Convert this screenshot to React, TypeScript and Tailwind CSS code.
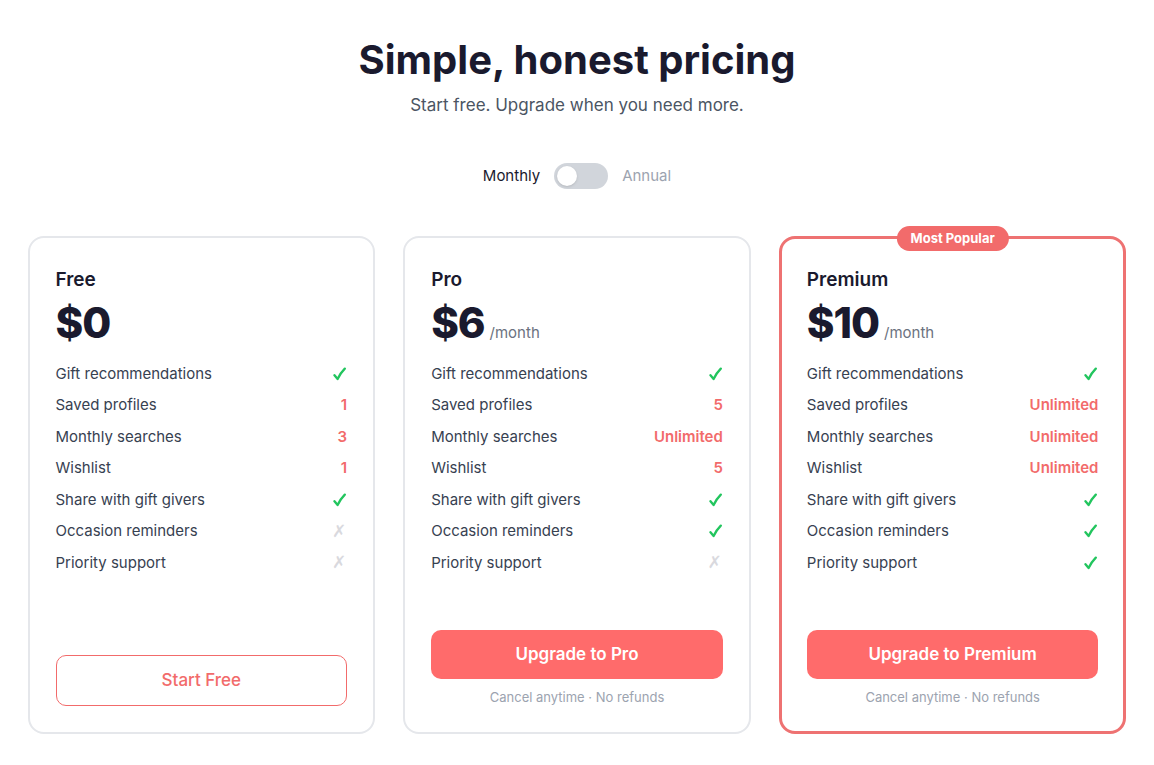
import { useState } from "react";

type Val = "check" | "x" | string;

interface PlanI {
  name: string;
  price: string;
  per?: boolean;
  features: [string, Val][];
  cta: string;
  primary?: boolean;
  popular?: boolean;
  note?: boolean;
}

const plans: PlanI[] = [
  {
    name: "Free",
    price: "$0",
    features: [
      ["Gift recommendations", "check"],
      ["Saved profiles", "1"],
      ["Monthly searches", "3"],
      ["Wishlist", "1"],
      ["Share with gift givers", "check"],
      ["Occasion reminders", "x"],
      ["Priority support", "x"],
    ],
    cta: "Start Free",
  },
  {
    name: "Pro",
    price: "$6",
    per: true,
    features: [
      ["Gift recommendations", "check"],
      ["Saved profiles", "5"],
      ["Monthly searches", "Unlimited"],
      ["Wishlist", "5"],
      ["Share with gift givers", "check"],
      ["Occasion reminders", "check"],
      ["Priority support", "x"],
    ],
    cta: "Upgrade to Pro",
    primary: true,
    note: true,
  },
  {
    name: "Premium",
    price: "$10",
    per: true,
    features: [
      ["Gift recommendations", "check"],
      ["Saved profiles", "Unlimited"],
      ["Monthly searches", "Unlimited"],
      ["Wishlist", "Unlimited"],
      ["Share with gift givers", "check"],
      ["Occasion reminders", "check"],
      ["Priority support", "check"],
    ],
    cta: "Upgrade to Premium",
    primary: true,
    popular: true,
    note: true,
  },
];

function Value({ v }: { v: Val }) {
  if (v === "check")
    return (
      <svg width="13" height="14" viewBox="0 0 13 14" className="mr-[1px]">
        <path
          d="M1.5 8.2 L4.6 12 C6.5 8 8.8 4.6 11.8 1.6"
          fill="none"
          stroke="#22c55e"
          strokeWidth="2.3"
          strokeLinecap="round"
          strokeLinejoin="round"
        />
      </svg>
    );
  if (v === "x")
    return <span className="font-['DejaVu_Sans',sans-serif] text-[17px] text-[#d9d9de] mr-[1px]">✗</span>;
  return <span className="text-[15px] font-semibold text-[#f26b6b]">{v}</span>;
}

function PlanCard({ plan }: { plan: PlanI }) {
  return (
    <div
      className={`relative flex flex-col rounded-2xl bg-white ${
        plan.popular
          ? "border-[3px] border-[#ee7272] px-[25px] pt-[27px] pb-[25px]"
          : "border-2 border-[#e5e7eb] px-[26px] pt-[28px] pb-[26px]"
      }`}
    >
      {plan.popular && (
        <div className="absolute -top-[13px] left-1/2 -translate-x-1/2 rounded-full bg-[#f26b6b] px-[14px] h-[25px] flex items-center text-[13px] font-bold text-white">
          Most Popular
        </div>
      )}
      <p className="text-[19px] leading-[28px] font-semibold text-[#1a1a2e]">{plan.name}</p>
      <div className="mt-[2px] flex items-baseline h-[54px]">
        <span className="text-[42px] leading-[54px] font-extrabold text-[#1a1a2e] tracking-tight">{plan.price}</span>
        {plan.per && <span className="ml-[5px] text-[15px] text-[#6b7280]">/month</span>}
      </div>
      <ul className="mt-[8px] flex flex-col">
        {plan.features.map(([label, v]) => (
          <li key={label} className="flex h-[31.5px] items-center justify-between">
            <span className="text-[15px] text-[#374151]">{label}</span>
            <Value v={v} />
          </li>
        ))}
      </ul>
      <div className="mt-auto pt-6">
        {plan.primary ? (
          <button className="h-[49px] w-full rounded-[10px] bg-[#ff6b6b] text-[17px] font-semibold text-white">
            {plan.cta}
          </button>
        ) : (
          <button className="h-[51px] w-full rounded-[10px] border border-[#f26b6b] bg-white text-[17px] font-medium text-[#f26b6b]">
            {plan.cta}
          </button>
        )}
        {plan.note && (
          <p className="mt-[9px] text-center text-[13px] leading-[18px] text-[#9ca3af]">
            Cancel anytime · No refunds
          </p>
        )}
      </div>
    </div>
  );
}

export default function App() {
  const [annual, setAnnual] = useState(false);
  return (
    <div className="min-h-screen bg-white font-['Inter',sans-serif]">
      <div className="mx-auto w-[1099px] pt-[34px]">
        <h1 className="text-center text-[40px] leading-[52px] font-bold tracking-normal text-[#1a1a2e]">
          Simple, honest pricing
        </h1>
        <p className="mt-[7px] text-center text-[17px] leading-[24px] text-[#4b5563]">
          Start free. Upgrade when you need more.
        </p>
        <div className="mt-[46px] flex items-center justify-center gap-[14px]">
          <span className={`text-[15px] ${annual ? "text-[#9ca3af]" : "text-[#1a1a2e]"}`}>Monthly</span>
          <button
            onClick={() => setAnnual(!annual)}
            className="relative h-[26px] w-[54px] rounded-full bg-[#d1d5db]"
          >
            <span
              className={`absolute top-[3px] h-[20px] w-[20px] rounded-full bg-white shadow-sm ${
                annual ? "left-[31px]" : "left-[3px]"
              }`}
            />
          </button>
          <span className={`text-[15px] ${annual ? "text-[#1a1a2e]" : "text-[#9ca3af]"}`}>Annual</span>
        </div>
        <div className="mt-[47px] grid grid-cols-3 gap-[28px] h-[498px]">
          {plans.map((p) => (
            <PlanCard key={p.name} plan={p} />
          ))}
        </div>
      </div>
    </div>
  );
}
